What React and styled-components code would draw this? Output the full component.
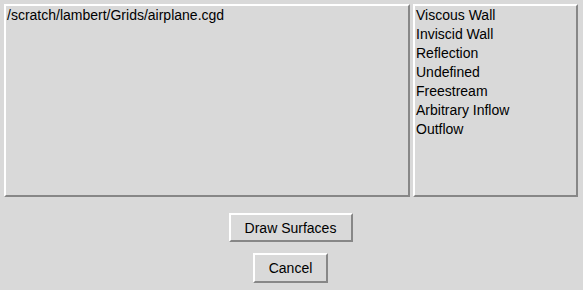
import React from 'react';
import styled, { createGlobalStyle } from 'styled-components';

const GlobalStyle = createGlobalStyle`
  html, body {
    margin: 0;
    padding: 0;
    background: #d9d9d9;
  }
  body {
    font-family: "Liberation Sans", Arial, sans-serif;
    font-size: 14px;
    color: #000;
  }
`;

const surfaces = [
  'Viscous Wall',
  'Inviscid Wall',
  'Reflection',
  'Undefined',
  'Freestream',
  'Arbitrary Inflow',
  'Outflow',
];

function App() {
  return (
    <Window>
      <GlobalStyle />
      <PanelRow>
        <Panel width='406px'>
          <FileText>/scratch/lambert/Grids/airplane.cgd</FileText>
        </Panel>
        <Panel width='165px'>
          <List>
            {surfaces.map((s) => (
              <ListItem key={s}>{s}</ListItem>
            ))}
          </List>
        </Panel>
      </PanelRow>
      <Buttons>
        <Button width='124px'>Draw Surfaces</Button>
        <Button width='75px' height='30px'>Cancel</Button>
      </Buttons>
    </Window>
  );
}

const Window = styled.div`
  width: 583px;
  height: 290px;
  box-sizing: border-box;
  padding: 4px;
  background: #d9d9d9;
`;

const PanelRow = styled.div`
  display: flex;
  gap: 3px;
  height: 193px;
`;

const Panel = styled.div`
  width: ${(p) => p.width};
  box-sizing: border-box;
  border: 2px solid;
  border-color: #ffffff #878787 #878787 #ffffff;
  overflow: hidden;
`;

const FileText = styled.div`
  padding: 1px 0 0 1px;
  line-height: 17px;
  white-space: nowrap;
`;

const List = styled.div`
  display: flex;
  flex-direction: column;
  padding: 0 0 0 1px;
`;

const ListItem = styled.div`
  height: 19px;
  line-height: 19px;
  white-space: nowrap;
`;

const Buttons = styled.div`
  display: flex;
  flex-direction: column;
  align-items: center;
  gap: 11px;
  padding-top: 16px;
  padding-right: 2px;
`;

const Button = styled.button`
  width: ${(p) => p.width};
  height: ${(p) => p.height || '29px'};
  box-sizing: border-box;
  margin: 0;
  padding: 0;
  background: #d9d9d9;
  border: 2px solid;
  border-color: #ffffff #878787 #878787 #ffffff;
  border-radius: 0;
  font-family: "Liberation Sans", Arial, sans-serif;
  font-size: 14px;
  color: #000;
  cursor: pointer;
`;

export default App;
